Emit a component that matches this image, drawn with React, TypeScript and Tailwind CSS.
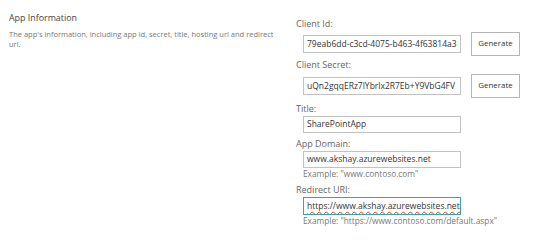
const font = { fontFamily: '"Open Sans", "Noto Sans", sans-serif' };

function Field({
  label,
  value,
  example,
  button,
  focused,
  rowClass,
  inputClass,
  className,
}: {
  label: string;
  value: string;
  example?: string;
  button?: boolean;
  focused?: boolean;
  rowClass: string;
  inputClass: string;
  className: string;
}) {
  return (
    <div className={'flex flex-col ' + className}>
      <label className="text-[9px] leading-[12px] text-[#666]">{label}</label>
      <div className={'flex items-center pl-[7px] ' + rowClass}>
        <div
          className={
            'w-[158px] border bg-white pl-[3px] text-[8.5px] text-[#333] overflow-hidden whitespace-nowrap flex items-center ' +
            inputClass +
            (focused ? ' border-[#3aa3a6]' : ' border-[#c2c2c2]')
          }
        >
          {focused ? (
            <span className="underline decoration-wavy decoration-[#e33] decoration-[1px] underline-offset-[2px]">{value}</span>
          ) : (
            value
          )}
        </div>
        {button && (
          <button className="ml-[10px] w-[49px] h-[24px] border border-[#b5b5b5] bg-white text-[7.9px] text-[#333]">
            Generate
          </button>
        )}
      </div>
      {example && (
        <div className="pl-[7px] text-[8.3px] leading-[11px] text-[#777]">{example}</div>
      )}
    </div>
  );
}

export default function App() {
  return (
    <div className="w-[537px] h-[243px] bg-white flex" style={font}>
      <div className="w-[296px] pl-[9px] pt-[11px]">
        <h2 className="text-[8.9px] leading-[13px] text-[#444]">App Information</h2>
        <p className="mt-[5px] w-[266px] text-[7.5px] leading-[10px] text-[#777]">
          The app's information, including app id, secret, title, hosting url and redirect url.
        </p>
      </div>
      <div className="pt-[18px] flex flex-col">
        <Field
          className=""
          rowClass="mt-[2px] h-[24px]"
          inputClass="h-[18px]"
          label="Client Id:"
          value="79eab6dd-c3cd-4075-b463-4f63814a3"
          button
        />
        <Field
          className="mt-[3px]"
          rowClass="mt-[3px] h-[24px]"
          inputClass="h-[18px]"
          label="Client Secret:"
          value="uQn2gqqERz7lYbrlx2R7Eb+Y9VbG4FV"
          button
        />
        <Field
          className="mt-[5px]"
          rowClass="mt-[1px] h-[17px]"
          inputClass="h-[17px]"
          label="Title:"
          value="SharePointApp"
        />
        <Field
          className="mt-[5px]"
          rowClass="mt-[1px] h-[17px]"
          inputClass="h-[17px]"
          label="App Domain:"
          value="www.akshay.azurewebsites.net"
          example={'Example: "www.contoso.com"'}
        />
        <Field
          className="mt-[5px]"
          rowClass="mt-[1px] h-[18px]"
          inputClass="h-[18px]"
          label="Redirect URI:"
          value="https://www.akshay.azurewebsites.net/"
          example={'Example: "https://www.contoso.com/default.aspx"'}
          focused
        />
      </div>
    </div>
  );
}
